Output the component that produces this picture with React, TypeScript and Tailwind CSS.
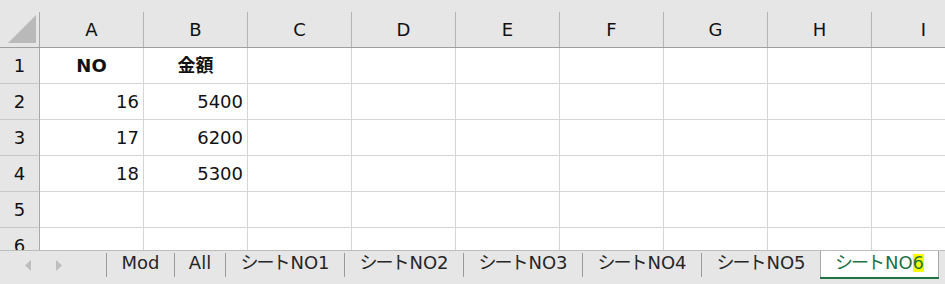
const columns = ['A', 'B', 'C', 'D', 'E', 'F', 'G', 'H', 'I'];

type Row = { no: string; a?: string; b?: string; bold?: boolean };

const rows: Row[] = [
  { no: '1', a: 'NO', b: '金額', bold: true },
  { no: '2', a: '16', b: '5400' },
  { no: '3', a: '17', b: '6200' },
  { no: '4', a: '18', b: '5300' },
  { no: '5' },
  { no: '6' },
];

const sheets = [
  { kana: '', name: 'Mod', w: 'w-[67px]' },
  { kana: '', name: 'All', w: 'w-[50px]' },
  { kana: 'シート', name: 'NO1', w: 'w-[118px]' },
  { kana: 'シート', name: 'NO2', w: 'w-[118px]' },
  { kana: 'シート', name: 'NO3', w: 'w-[118px]' },
  { kana: 'シート', name: 'NO4', w: 'w-[118px]' },
  { kana: 'シート', name: 'NO5', w: 'w-[118px]' },
];

const Separator = () => <div className="w-px h-[24px] bg-[#9a9a9a] shrink-0" />;

export default function App() {
  return (
    <div
      className="w-[945px] h-[284px] overflow-hidden bg-white text-[#111] flex flex-col"
      style={{ fontFamily: '"DejaVu Sans", "Noto Sans CJK JP", sans-serif' }}
    >
      {/* column headers */}
      <div className="flex h-[48px] shrink-0 bg-[#e6e6e6] border-b border-[#9e9e9e]">
        <div className="w-[40px] shrink-0 border-r border-[#a8a8a8] mt-[12px] relative">
          <svg className="absolute left-[8px] top-[3px]" width="28" height="28" viewBox="0 0 28 28">
            <polygon points="28,0 28,28 0,28" fill="#b9b9b9" />
          </svg>
        </div>
        {columns.map((c) => (
          <div key={c} className="w-[104px] shrink-0 flex flex-col">
            <div className="h-[12px]" />
            <div className="flex-1 border-r border-[#b4b4b4] flex items-center justify-center text-[18px] leading-none">
              {c}
            </div>
          </div>
        ))}
      </div>

      {/* grid body */}
      <div className="h-[202px] shrink-0 overflow-hidden">
        {rows.map((r) => (
          <div key={r.no} className="flex h-[36px]">
            <div className="w-[40px] shrink-0 bg-[#e6e6e6] border-r border-[#a8a8a8] border-b border-b-[#c8c8c8] flex items-center justify-center text-[18px]">
              {r.no}
            </div>
            {columns.map((c) => {
              const v = c === 'A' ? r.a : c === 'B' ? r.b : undefined;
              return (
                <div
                  key={c}
                  className={`w-[104px] shrink-0 border-r border-b border-[#d4d4d4] flex items-center text-[18px] ${
                    r.bold ? 'justify-center font-bold' : 'justify-end pr-[4px]'
                  }`}
                >
                  {v}
                </div>
              );
            })}
          </div>
        ))}
      </div>

      {/* sheet tabs */}
      <div className="flex-1 bg-[#e6e6e6] border-t border-[#bdbdbd] flex items-stretch">
        <div className="w-[106px] shrink-0 flex items-center -mt-[4px]">
          <svg className="ml-[25px]" width="6" height="11" viewBox="0 0 6 11">
            <polygon points="6,0 6,11 0,5.5" fill="#bdbdbd" />
          </svg>
          <svg className="ml-[25px]" width="6" height="11" viewBox="0 0 6 11">
            <polygon points="0,0 0,11 6,5.5" fill="#bdbdbd" />
          </svg>
        </div>
        <div className="flex items-start">
          {sheets.map((s) => (
            <div key={s.name} className="flex items-center h-[24px] mt-[2px]">
              <Separator />
              <div className={`${s.w} shrink-0 flex items-center justify-center text-[18px] leading-none text-[#262626] -mt-[5px]`}>
                {s.kana && <span className="tracking-[-2px] mr-[2px]">{s.kana}</span>}
                {s.name}
              </div>
            </div>
          ))}
        </div>
        <div className="w-[119px] shrink-0 h-[28px] bg-white border-x border-[#a8a8a8] flex flex-col">
          <div className="flex-1 flex items-center justify-center text-[18px] leading-none text-[#217346] -mt-[2px]">
            <span className="tracking-[-2px] mr-[2px]">シート</span>NO<span className="bg-[#ffff00]">6</span>
          </div>
          <div className="h-[2px] bg-[#217346] -mx-px" />
        </div>
      </div>
    </div>
  );
}
